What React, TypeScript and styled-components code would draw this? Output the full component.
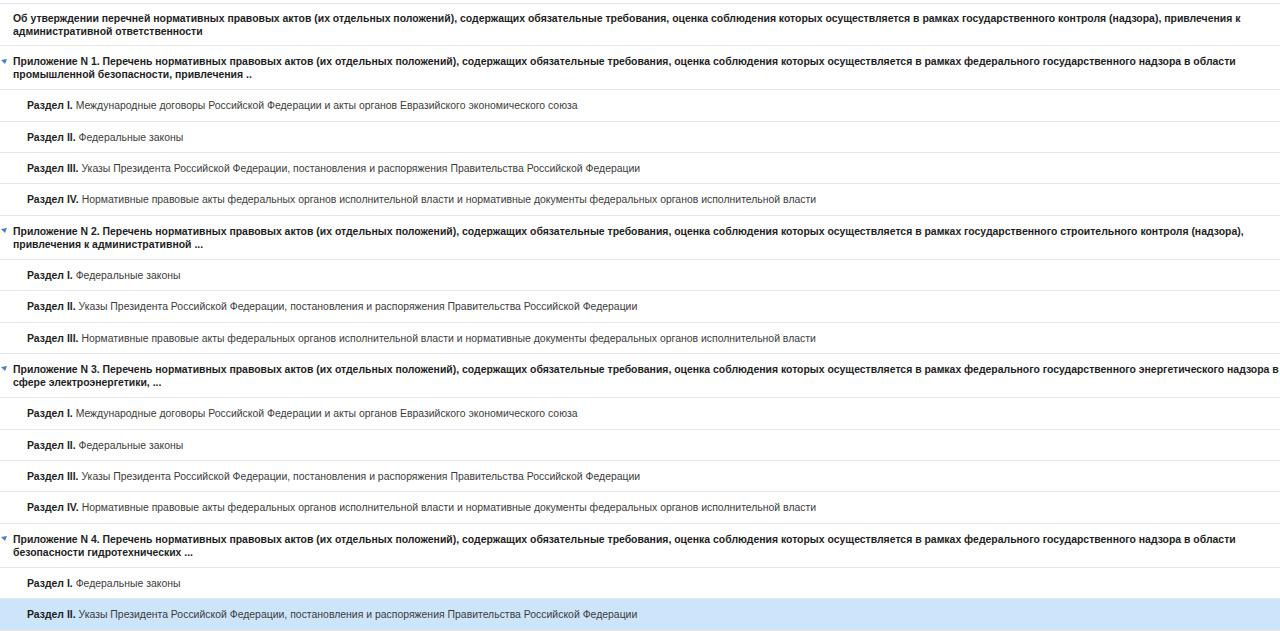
import React from "react";
import styled, { createGlobalStyle } from "styled-components";

const GlobalStyle = createGlobalStyle`
  html, body {
    margin: 0;
    padding: 0;
    background: #ffffff;
    overflow: hidden;
  }
  body {
    font-family: "Liberation Sans", Arial, sans-serif;
    font-size: 10.45px;
    color: #222;
  }
`;

const Page = styled.div`
  width: 1280px;
  height: 631px;
  overflow: hidden;
  padding-top: 3px;
  box-sizing: border-box;
`;

const List = styled.div`
  border-top: 1px solid #e6e6e6;
  width: 1320px;
`;

const paddings = ["8px 0 7px 0", "9px 0 8.33px 0", "9px 0 8.33px 27px"];

const Row = styled.div<{ level: number; selected?: boolean }>`
  display: flex;
  align-items: flex-start;
  box-sizing: border-box;
  border-bottom: 1px solid #e8e8e8;
  background: ${({ selected }) => (selected ? "#cde5fb" : "#ffffff")};
  padding: ${({ level }) => paddings[level]};
  line-height: 13px;
  white-space: nowrap;
`;

const Toggle = styled.span`
  width: 13px;
  height: 13px;
  flex: none;
  display: flex;
  align-items: center;
  justify-content: flex-start;
  padding-left: 1px;
  box-sizing: border-box;
`;

const Heading = styled.div`
  font-weight: bold;
  color: #1e1e1e;
`;

const Label = styled.span`
  font-weight: bold;
  color: #1e1e1e;
`;

const Caption = styled.span`
  color: #3c3c3c;
`;

const Arrow = () => (
  <svg width="6" height="6" viewBox="0 0 6 6">
    <path d="M0 1 L6 0 L4 5 Z" fill="#4a7fc0" />
  </svg>
);

type Section = { label: string; text: string; selected?: boolean };
type Appendix = { lines: string[]; sections: Section[] };

const S1 = "Международные договоры Российской Федерации и акты органов Евразийского экономического союза";
const S2 = "Федеральные законы";
const S3 = "Указы Президента Российской Федерации, постановления и распоряжения Правительства Российской Федерации";
const S4 = "Нормативные правовые акты федеральных органов исполнительной власти и нормативные документы федеральных органов исполнительной власти";

const appendices: Appendix[] = [
  {
    lines: [
      "Приложение N 1. Перечень нормативных правовых актов (их отдельных положений), содержащих обязательные требования, оценка соблюдения которых осуществляется в рамках федерального государственного надзора в области",
      "промышленной безопасности, привлечения ..",
    ],
    sections: [
      { label: "Раздел I.", text: S1 },
      { label: "Раздел II.", text: S2 },
      { label: "Раздел III.", text: S3 },
      { label: "Раздел IV.", text: S4 },
    ],
  },
  {
    lines: [
      "Приложение N 2. Перечень нормативных правовых актов (их отдельных положений), содержащих обязательные требования, оценка соблюдения которых осуществляется в рамках государственного строительного контроля (надзора),",
      "привлечения к административной ...",
    ],
    sections: [
      { label: "Раздел I.", text: S2 },
      { label: "Раздел II.", text: S3 },
      { label: "Раздел III.", text: S4 },
    ],
  },
  {
    lines: [
      "Приложение N 3. Перечень нормативных правовых актов (их отдельных положений), содержащих обязательные требования, оценка соблюдения которых осуществляется в рамках федерального государственного энергетического надзора в",
      "сфере электроэнергетики, ...",
    ],
    sections: [
      { label: "Раздел I.", text: S1 },
      { label: "Раздел II.", text: S2 },
      { label: "Раздел III.", text: S3 },
      { label: "Раздел IV.", text: S4 },
    ],
  },
  {
    lines: [
      "Приложение N 4. Перечень нормативных правовых актов (их отдельных положений), содержащих обязательные требования, оценка соблюдения которых осуществляется в рамках федерального государственного надзора в области",
      "безопасности гидротехнических ...",
    ],
    sections: [
      { label: "Раздел I.", text: S2 },
      { label: "Раздел II.", text: S3, selected: true },
    ],
  },
];

const Lines = ({ lines }: { lines: string[] }) => (
  <Heading>
    {lines.map((l, i) => (
      <div key={i}>{l}</div>
    ))}
  </Heading>
);

export default function App() {
  return (
    <>
      <GlobalStyle />
      <Page>
        <List>
          <Row level={0}>
            <Toggle />
            <Lines
              lines={[
                "Об утверждении перечней нормативных правовых актов (их отдельных положений), содержащих обязательные требования, оценка соблюдения которых осуществляется в рамках государственного контроля (надзора), привлечения к",
                "административной ответственности",
              ]}
            />
          </Row>
          {appendices.map((a, i) => (
            <React.Fragment key={i}>
              <Row level={1}>
                <Toggle>
                  <Arrow />
                </Toggle>
                <Lines lines={a.lines} />
              </Row>
              {a.sections.map((s, j) => (
                <Row level={2} key={j} selected={s.selected}>
                  <Label>{s.label}</Label>&nbsp;<Caption>{s.text}</Caption>
                </Row>
              ))}
            </React.Fragment>
          ))}
        </List>
      </Page>
    </>
  );
}
